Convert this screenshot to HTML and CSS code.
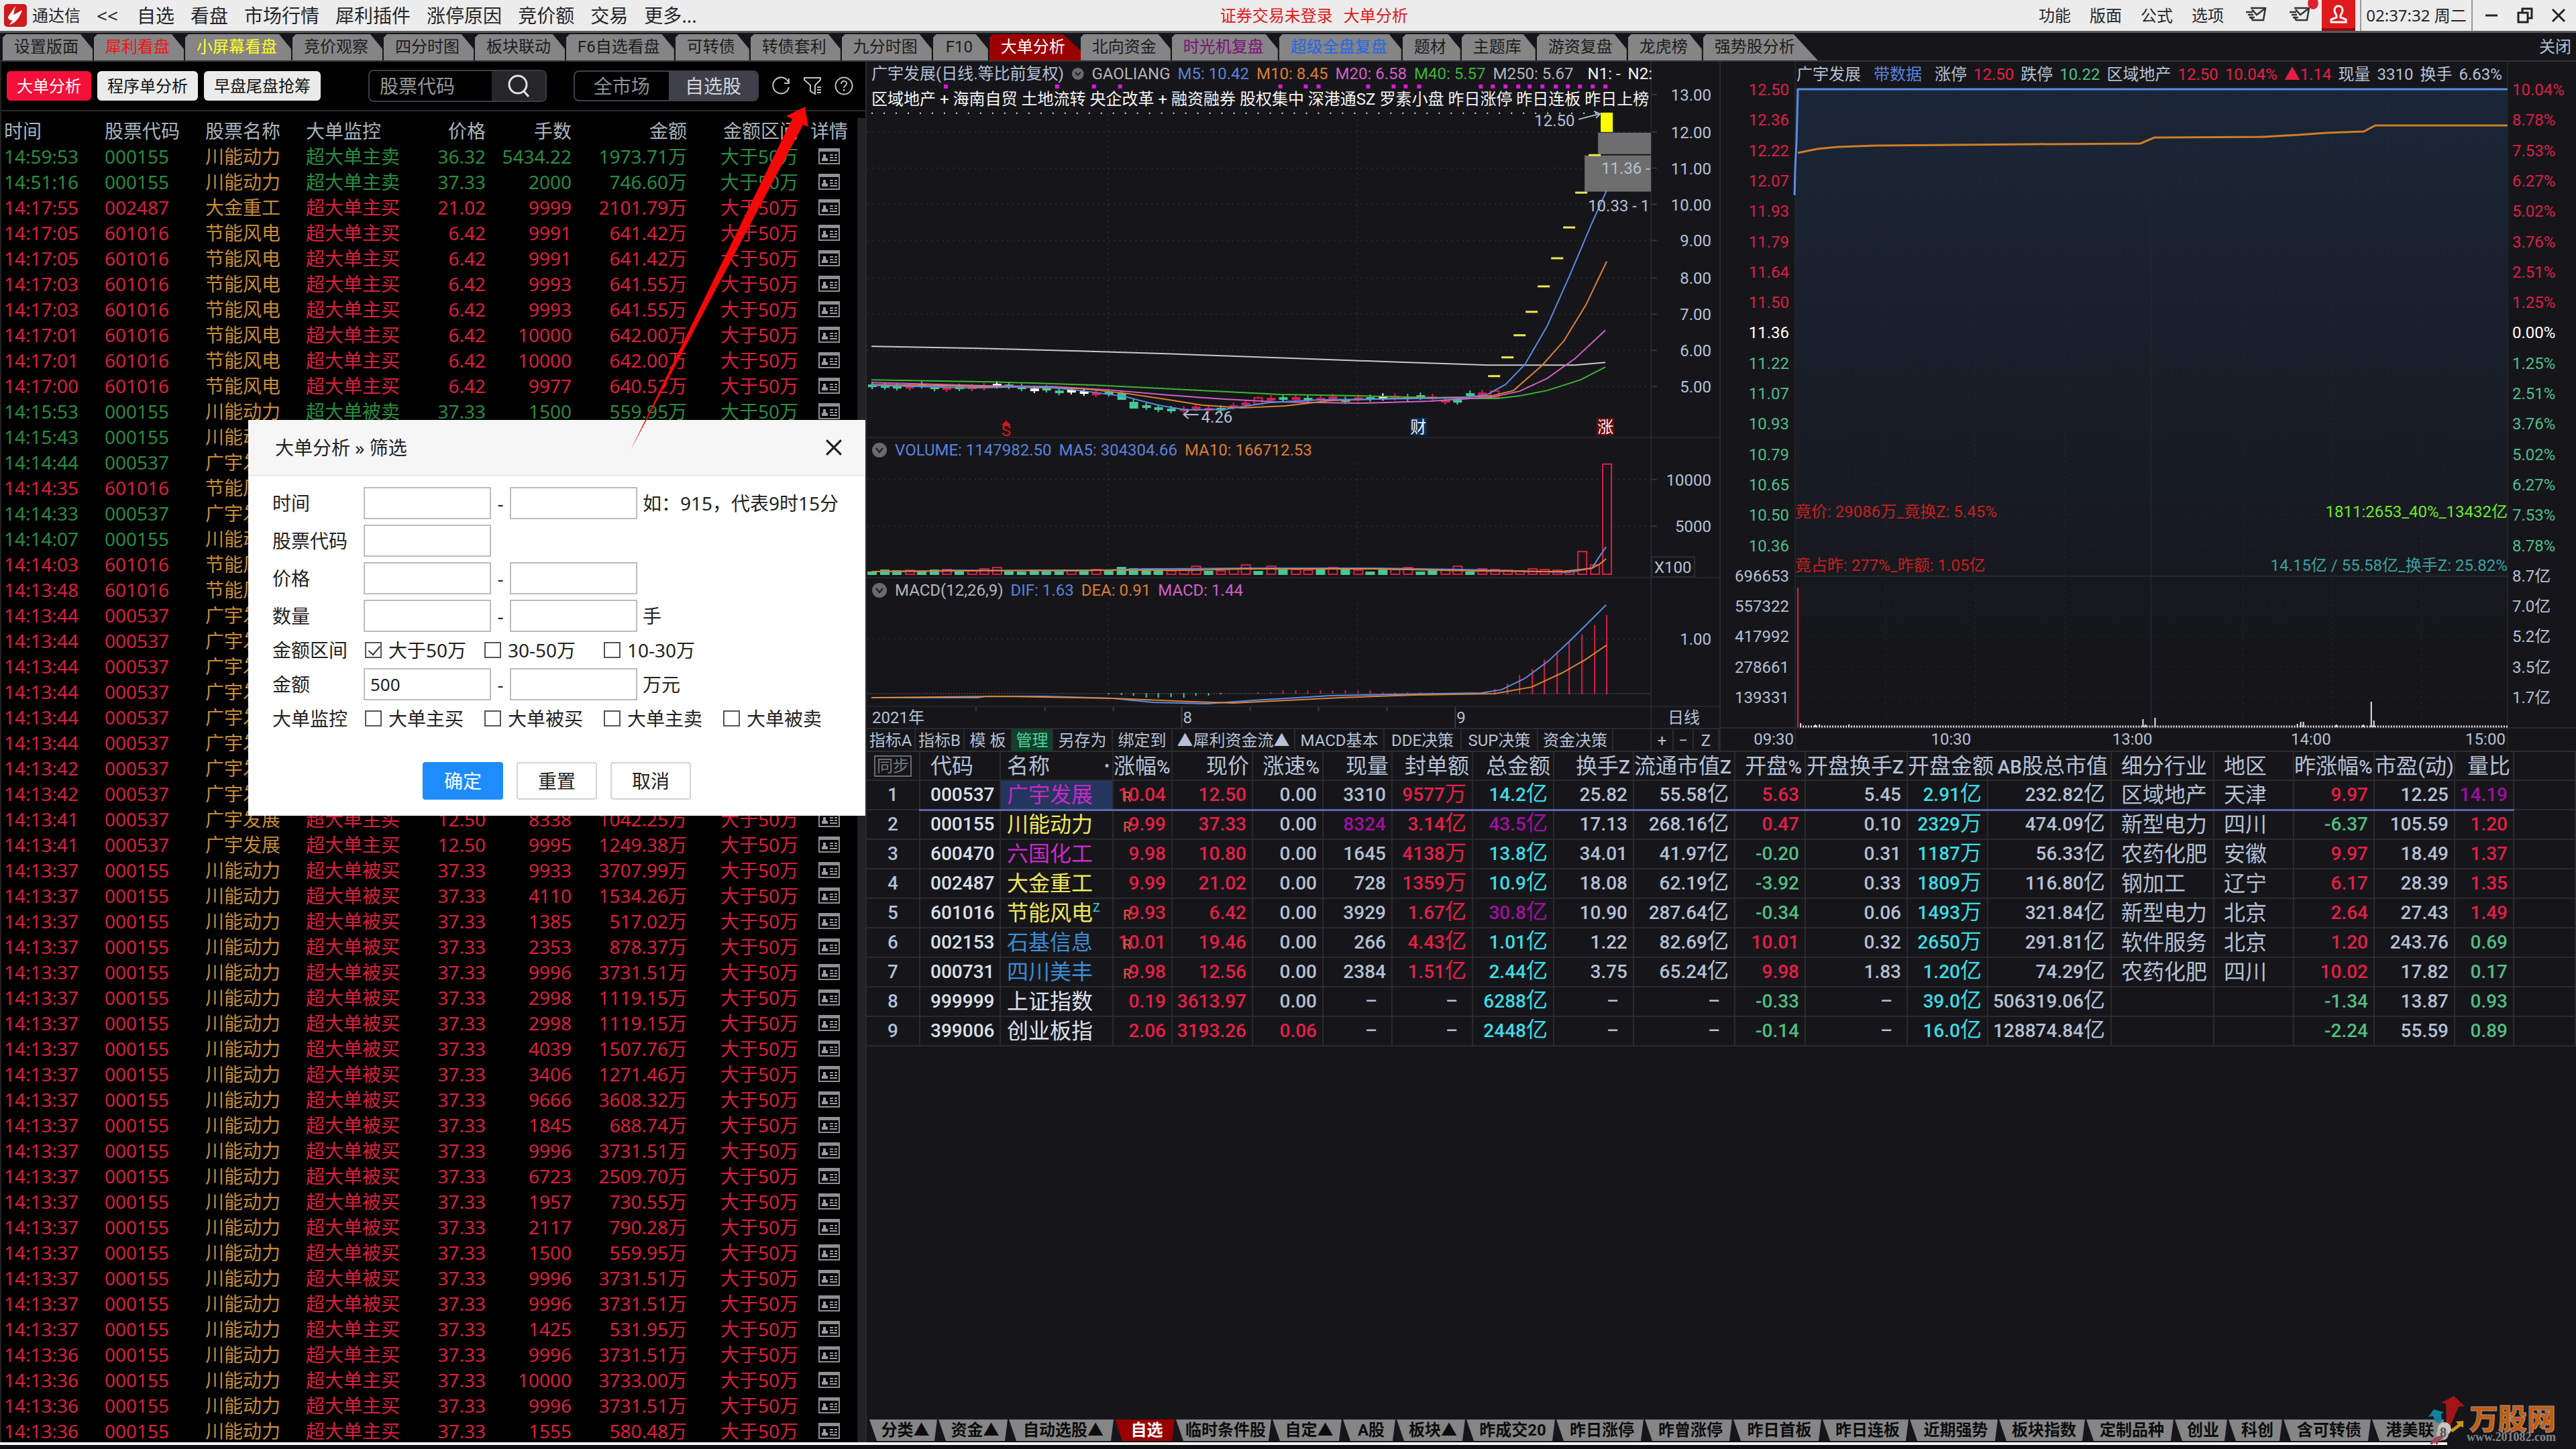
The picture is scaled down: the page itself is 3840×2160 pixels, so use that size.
FILE: index.html
```html
<!DOCTYPE html>
<html lang="zh-CN">
<head>
    <meta charset="UTF-8">
    <meta name="viewport" content="width=device-width, initial-scale=1.0">
    <title>通达信 - 大单分析</title>
    <link rel="stylesheet" href="styles.css">
</head>
<body>

<svg class="sprite" aria-hidden="true">
    <symbol id="i-card" viewBox="0 0 32 24">
        <path d="M0 0h32v24H0z" fill="#8e9094"/>
        <path d="M2 5h28v17H2z" fill="#000"/>
        <path d="M5 19v-4l2-1V9h4v5l3 1v4z" fill="#9a9ca0"/>
        <path d="M17 10h5M24 10h4M17 14h5M24 14h4M17 18h11" stroke="#9a9ca0" stroke-width="2"/>
    </symbol>
    <symbol id="i-mail" viewBox="0 0 32 24">
        <path d="M8 2h22l-3 18H11l-3-5" fill="none" stroke="#333" stroke-width="2.5"/>
        <path d="M10 4l7 8L29 3M1 8h10M4 12h8M6 16h8" fill="none" stroke="#333" stroke-width="2.5"/>
    </symbol>
    <symbol id="i-fold" viewBox="0 0 24 24">
        <circle cx="12" cy="12" r="11" fill="#6a6a6a"/>
        <path d="M7 9l5 6 5-6" fill="none" stroke="#222" stroke-width="2.5"/>
    </symbol>
</svg>

<header class="topbar">
    <svg class="brand" viewBox="0 0 34 34">
        <rect width="34" height="34" rx="5" fill="#d01a1c"/>
        <path d="M17 3l-3 13 6-3 7-4c-3 9-8 19-19 22l5-7c-5 1-7-2-7-5z" fill="#fff"/>
    </svg>
    <span class="brand-name">通达信</span>
    <button class="back">&lt;&lt;</button>
    <nav class="menu">
        <a href="#">自选</a><a href="#">看盘</a><a href="#">市场行情</a><a href="#">犀利插件</a><a href="#">涨停原因</a><a href="#">竞价额</a><a href="#">交易</a><a href="#">更多...</a>
    </nav>
    <div class="notice"><span>证券交易未登录</span><span>大单分析</span></div>
    <nav class="menu-right">
        <a href="#">功能</a><a href="#">版面</a><a href="#">公式</a><a href="#">选项</a>
    </nav>
    <button class="mail" aria-label="邮件"><svg><use href="#i-mail"/></svg></button>
    <button class="mail unread" aria-label="未读邮件"><svg><use href="#i-mail"/></svg></button>
    <button class="user" aria-label="用户">
        <svg viewBox="0 0 30 30"><path d="M15 3c4 0 6 3 6 6 0 4-2 6-3 8v3l8 3v4H4v-4l8-3v-3c-1-2-3-4-3-8 0-3 2-6 6-6z" fill="none" stroke="#fff" stroke-width="3"/></svg>
    </button>
    <time class="clock">02:37:32 周二</time>
    <div class="win">
        <button aria-label="最小化"><svg viewBox="0 0 24 24"><path d="M3 12h18" stroke="#222" stroke-width="3"/></svg></button>
        <button aria-label="还原"><svg viewBox="0 0 24 24"><path d="M2 8h14v14H2zM8 8V2h14v14h-6" fill="none" stroke="#222" stroke-width="3"/></svg></button>
        <button aria-label="关闭窗口"><svg viewBox="0 0 24 24"><path d="M3 3l18 18M21 3L3 21" stroke="#222" stroke-width="3"/></svg></button>
    </div>
</header>

<nav class="tabs">
    <a href="#">设置版面</a><a href="#" class="c-red">犀利看盘</a><a href="#" class="c-yellow">小屏幕看盘</a><a href="#">竞价观察</a><a href="#">四分时图</a><a href="#">板块联动</a><a href="#">F6自选看盘</a><a href="#">可转债</a><a href="#">转债套利</a><a href="#">九分时图</a><a href="#">F10</a><a href="#" class="active">大单分析</a><a href="#">北向资金</a><a href="#" class="c-purple">时光机复盘</a><a href="#" class="c-blue">超级全盘复盘</a><a href="#">题材</a><a href="#">主题库</a><a href="#">游资复盘</a><a href="#">龙虎榜</a><a href="#" class="last">强势股分析</a>
    <button class="close-page">关闭</button>
</nav>

<main class="main">
    <section class="orders">
        <div class="toolbar">
            <button class="btn on">大单分析</button>
            <button class="btn">程序单分析</button>
            <button class="btn">早盘尾盘抢筹</button>
            <div class="search">
                <input type="text" placeholder="股票代码" aria-label="股票代码">
                <button aria-label="搜索"><svg viewBox="0 0 36 36"><circle cx="17" cy="16" r="13"/><path d="M26 26l7 8"/></svg></button>
            </div>
            <div class="segment">
                <button>全市场</button>
                <button class="on">自选股</button>
            </div>
            <div class="tools">
                <button aria-label="刷新"><svg viewBox="0 0 28 28"><path d="M25 8A12 12 0 1 0 26 16M26 3v7h-7"/></svg></button>
                <button aria-label="筛选"><svg viewBox="0 0 28 28"><path d="M2 2h24v3l-8 8v13l-7-4V13L2 5zM21 16h6M21 20h6M21 24h6"/></svg></button>
                <button aria-label="帮助"><svg viewBox="0 0 28 28"><circle cx="14" cy="14" r="12.500"/><path d="M10 11c0-6 9-5 8 0-1 3-4 3-4 6M14 19v3"/></svg></button>
            </div>
        </div>
        <div class="orders-body">
            <table class="order-table">
                <thead>
                <tr><th>时间</th><th>股票代码</th><th>股票名称</th><th>大单监控</th><th class="r">价格</th><th class="r">手数</th><th class="r">金额</th><th class="r">金额区间</th><th class="c">详情</th></tr>
                </thead>
                <tbody id="orders"></tbody>
            </table>
            <div class="scrollbar"></div>
        </div>

        <form class="dialog" onsubmit="return false">
            <div class="dialog-head">
                <h2>大单分析 » 筛选</h2>
                <button type="button" aria-label="关闭"><svg viewBox="0 0 24 24"><path d="M2 2l20 20M22 2L2 22"/></svg></button>
            </div>
            <div class="dialog-body">
                <div class="row"><label for="t1">时间</label><input id="t1" type="text"><i>-</i><input type="text" aria-label="结束时间"><span>如：915，代表9时15分</span></div>
                <div class="row"><label for="code">股票代码</label><input id="code" type="text"></div>
                <div class="row"><label for="p1">价格</label><input id="p1" type="text"><i>-</i><input type="text" aria-label="最高价格"></div>
                <div class="row"><label for="n1">数量</label><input id="n1" type="text"><i>-</i><input type="text" aria-label="最大数量"><span>手</span></div>
                <div class="row checks"><b>金额区间</b>
                    <label><input type="checkbox" checked>大于50万</label>
                    <label><input type="checkbox">30-50万</label>
                    <label><input type="checkbox">10-30万</label>
                </div>
                <div class="row"><label for="m1">金额</label><input id="m1" type="text" value="500"><i>-</i><input type="text" aria-label="最大金额"><span>万元</span></div>
                <div class="row checks"><b>大单监控</b>
                    <label><input type="checkbox">大单主买</label>
                    <label><input type="checkbox">大单被买</label>
                    <label><input type="checkbox">大单主卖</label>
                    <label><input type="checkbox">大单被卖</label>
                </div>
            </div>
            <div class="dialog-foot">
                <button class="primary">确定</button>
                <button type="reset">重置</button>
                <button type="button">取消</button>
            </div>
        </form>

        <svg class="pointer" viewBox="0 0 270 520"><path d="M262 4L234 18 243 22 2 516 259 31 267 34z" fill="#f40808"/></svg>
    </section>

    <section class="market">
        <div class="charts">
            <div class="kline">
                <div class="pane pane-price">
                    <svg id="price" viewBox="1293 92 1272 560" preserveAspectRatio="none"></svg>
                    <div class="caption">
                        <p><span>广宇发展(日线.等比前复权)</span><svg class="fold"><use href="#i-fold"/></svg><span class="t-grey">GAOLIANG</span><span class="t-blue">M5: 10.42</span><span class="t-orange">M10: 8.45</span><span class="t-pink">M20: 6.58</span><span class="t-green">M40: 5.57</span><span class="t-grey">M250: 5.67</span><span class="t-white gap">N1: -</span><span class="t-white">N2:</span></p>
                        <p class="t-white">区域地产 + 海南自贸 土地流转 央企改革 + 融资融券 股权集中 深港通SZ 罗素小盘 昨日涨停 昨日连板 昨日上榜</p>
                    </div>
                </div>
                <div class="pane pane-volume">
                    <svg id="volume" viewBox="1293 653 1272 208" preserveAspectRatio="none"></svg>
                    <div class="caption">
                        <p class="t-blue"><svg class="fold"><use href="#i-fold"/></svg><span>VOLUME: 1147982.50</span><span>MA5: 304304.66</span><span class="t-orange">MA10: 166712.53</span></p>
                    </div>
                </div>
                <div class="pane pane-macd">
                    <svg id="macd" viewBox="1293 862 1272 191" preserveAspectRatio="none"></svg>
                    <div class="caption">
                        <p><svg class="fold"><use href="#i-fold"/></svg><span class="t-grey">MACD(12,26,9)</span><span class="t-blue">DIF: 1.63</span><span class="t-orange">DEA: 0.91</span><span class="t-pink">MACD: 1.44</span></p>
                    </div>
                </div>
                <div class="pane pane-date">
                    <svg id="dates" viewBox="1293 1054 1272 31" preserveAspectRatio="none"></svg>
                </div>
                <nav class="indicators">
                    <a href="#">指标A</a><a href="#">指标B</a><a href="#">模 板</a><a href="#" class="on">管理</a><a href="#">另存为</a><a href="#">绑定到</a><a href="#">▲犀利资金流▲</a><a href="#">MACD基本</a><a href="#">DDE决策</a><a href="#">SUP决策</a><a href="#">资金决策</a><span></span><a href="#">+</a><a href="#">−</a><a href="#">Z</a>
                </nav>
            </div>
            <div class="minute pane">
                <svg id="minute" viewBox="2566 92 1274 1029" preserveAspectRatio="none"></svg>
                <div class="caption minute-caption">
                    <p><span>广宇发展</span><span class="t-blue wide">带数据</span><span>涨停</span><span class="t-red">12.50</span><span>跌停</span><span class="t-mint">10.22</span><span>区域地产</span><span class="t-red">12.50</span><span class="t-red">10.04%</span><span class="t-red">▲1.14</span><span>现量</span><span>3310</span><span>换手</span><span>6.63%</span></p>
                </div>
            </div>
        </div>

        <table class="quotes">
            <colgroup id="quote-cols"></colgroup>
            <thead>
            <tr><th class="c"><button class="sync">同步</button></th><th class="code">代码</th><th class="name">名称<em>•</em></th><th>涨幅<b>%</b></th><th>现价</th><th>涨速<b>%</b></th><th>现量</th><th>封单额</th><th>总金额</th><th>换手<b>Z</b></th><th>流通市值<b>Z</b></th><th>开盘<b>%</b></th><th>开盘换手<b>Z</b></th><th>开盘金额</th><th><b>AB</b>股总市值</th><th class="l">细分行业</th><th class="l">地区</th><th>昨涨幅<b>%</b></th><th>市盈(动)</th><th>量比</th><th></th></tr>
            </thead>
            <tbody id="quotes"></tbody>
        </table>

        <nav class="sheets" id="sheets"></nav>
    </section>
</main>
<div class="bottom-edge"></div>

<svg class="site-logo" viewBox="0 0 240 100">
    <path d="M58 21L74 36 65 37 53 65 47 63 46 32 39 31z" fill="#a31419"/>
    <path d="M28 41L43 45 39 48 40 58 36 62 30 59 27 51 20 52z" fill="#14809f"/>
    <path d="M61 59L72 58 72 68 68 66 56 75 52 72 64 63z" fill="#c99a12"/>
    <circle cx="44" cy="70" r="10" fill="#c9c6c0"/>
    <circle cx="41" cy="78" r="9" fill="#b8b5af"/>
    <text x="37" y="82" class="coin">8</text>
    <path d="M24 93q4-10 18-12M32 93q1-8 10-10" fill="none" stroke="#c8232b" stroke-width="3"/>
    <path d="M28 92q4-9 14-9" fill="none" stroke="#2a86b8" stroke-width="2"/>
    <text x="81" y="71" class="logo-name">万股网</text>
    <text x="77" y="88" class="logo-url">www.201082.com</text>
</svg>

<script src="script.js"></script>
</body>
</html>
```
FILE: styles.css
```css
* {
    box-sizing: border-box;
}

html, body {
    height: 100%;
    margin: 0;
}

body {
    display: flex;
    flex-direction: column;
    background: #16161a;
    color: #b4c0d6;
    font-family: "Noto Sans", "Noto Sans CJK SC", sans-serif;
    font-size: 28px;
    line-height: 38px;
    overflow: hidden;
}

a {
    color: inherit;
    text-decoration: none;
}

button {
    padding: 0;
    border: 0;
    background: none;
    color: inherit;
    font: inherit;
    cursor: pointer;
}

.sprite {
    position: absolute;
    width: 0;
    height: 0;
}

/* Top bar */
.topbar {
    display: flex;
    align-items: center;
    flex: none;
    height: 49px;
    padding-left: 6px;
    background: #ececec;
    border-bottom: 3px solid #58595c;
    color: #26262a;
    white-space: nowrap;
}

.brand {
    width: 34px;
    height: 34px;
    margin-right: 8px;
}

.brand-name {
    font-size: 24px;
}

.back {
    margin: 0 28px 0 24px;
}

.menu {
    display: flex;
    gap: 24px;
}

.notice {
    display: flex;
    flex: 1;
    gap: 16px;
    padding-left: 780px;
    color: #e01818;
    font-size: 24px;
}

.menu-right {
    display: flex;
    gap: 28px;
    margin-right: 32px;
    font-size: 24px;
}

.mail {
    height: 46px;
    margin-right: 33px;
}

.mail svg {
    width: 32px;
    height: 24px;
    margin-top: 6px;
}

.mail.unread {
    position: relative;
    margin-right: 17px;
}

.mail.unread::after {
    content: "";
    position: absolute;
    top: -4px;
    right: -12px;
    width: 16px;
    height: 18px;
    border-radius: 50%;
    background: #e02030;
}

.user {
    width: 50px;
    height: 46px;
    margin-right: 7px;
    background: #e01a1c;
    border-bottom: 4px solid #8c0d10;
}

.user svg {
    width: 30px;
    height: 30px;
    margin-top: 6px;
}

.clock {
    width: 168px;
    height: 46px;
    border: 1px solid #9a9a9a;
    border-width: 0 2px;
    font-size: 24px;
    line-height: 46px;
    text-align: center;
}

.win {
    display: flex;
    gap: 26px;
    padding: 0 14px 0 16px;
}

.win svg {
    display: block;
    width: 24px;
    height: 24px;
}

/* Page tabs */
.tabs {
    display: flex;
    flex: none;
    height: 43px;
    padding: 2px 7px 0 4px;
    border-bottom: 2px solid #333438;
    font: 24px/39px Roboto, "Noto Sans CJK SC", sans-serif;
    white-space: nowrap;
}

.tabs a {
    min-width: 84px;
    padding: 0 23px 0 17px;
    background: #858585;
    color: #1c1c1e;
    text-align: center;
    clip-path: polygon(0 5px, 5px 0, calc(100% - 20px) 0, calc(100% - 2px) 22px, calc(100% - 2px) 100%, 0 100%);
}

.tabs a.active {
    position: relative;
    margin-right: -16px;
    padding-right: 39px;
    background: #9c0000;
    color: #fff;
    clip-path: polygon(0 5px, 5px 0, calc(100% - 42px) 0, 100% 100%, 0 100%);
}

.tabs a.last {
    padding-right: 34px;
    clip-path: polygon(0 5px, 5px 0, calc(100% - 36px) 0, 100% 100%, 0 100%);
}

.tabs a.c-red { color: #f01414; }
.tabs a.c-yellow { color: #ffff20; }
.tabs a.c-purple { color: #7c1078; }
.tabs a.c-blue { color: #2468e8; }

.close-page {
    margin-left: auto;
}

/* Main area */
.main {
    display: grid;
    grid-template-columns: minmax(0, 1292fr) minmax(0, 2548fr);
    flex: 1;
    min-height: 0;
}

.orders {
    position: relative;
    display: flex;
    flex-direction: column;
    min-height: 0;
    background: #000;
    border-right: 2px solid #2c2c30;
    border-left: 2px solid #222;
}

.toolbar {
    display: flex;
    align-items: center;
    flex: none;
    height: 74px;
    padding: 0 18px 0 8px;
    border-bottom: 2px solid #2c2c2e;
    white-space: nowrap;
}

.btn {
    height: 44px;
    margin-right: 9px;
    padding: 0 15px;
    border-radius: 6px;
    background: #ebebeb;
    color: #111;
    font-size: 24px;
    line-height: 44px;
}

.btn.on {
    background: #f41038;
    color: #fff;
}

.search {
    display: flex;
    width: 266px;
    height: 48px;
    margin-left: 62px;
    border: 2px solid #3c3d44;
    border-radius: 8px;
    overflow: hidden;
}

.search input {
    flex: 1;
    min-width: 0;
    padding: 0 0 0 15px;
    border: 0;
    background: #000;
    color: #a0a0a0;
    font: inherit;
}

.search input::placeholder {
    color: #98989a;
}

.search button {
    width: 80px;
    background: #26262a;
}

.search svg {
    display: block;
    width: 36px;
    height: 36px;
    margin: auto;
    fill: none;
    stroke: #e4e4e4;
    stroke-width: 3;
}

.segment {
    display: flex;
    width: 277px;
    height: 46px;
    margin-left: 40px;
    border: 2px solid #3f404b;
    border-radius: 8px;
    overflow: hidden;
}

.segment button {
    flex: 1;
    color: #8f9092;
}

.segment .on {
    flex: 0 0 132px;
    background: #3f404b;
    color: #d4d4d6;
}

.tools {
    display: flex;
    gap: 19px;
    margin-left: 19px;
}

.tools svg {
    display: block;
    width: 28px;
    height: 28px;
    fill: none;
    stroke: #c0c0c2;
    stroke-width: 2;
}

.orders-body {
    display: flex;
    flex: 1;
    min-height: 0;
    padding-top: 10px;
    overflow: hidden;
}

.order-table {
    flex: 1;
    align-self: flex-start;
    width: 100%;
    border-collapse: collapse;
    table-layout: fixed;
    white-space: nowrap;
}

.order-table tr {
    height: 38px;
}

.order-table th, .order-table td {
    width: 150px;
    padding: 0 0 0 4px;
    font-weight: normal;
    line-height: 38px;
    text-align: left;
}

.order-table th {
    color: #aab4bc;
}

.order-table th:nth-child(5) { width: 122px; }
.order-table th:nth-child(6) { width: 128px; }
.order-table th:nth-child(7) { width: 172px; }
.order-table th:nth-child(8) { width: 166px; }
.order-table th:nth-child(9) { width: auto; }

.order-table .r { text-align: right; }
.order-table .c { text-align: center; }
.order-table .c button { display: block; margin: auto; }
.order-table .buy { color: #dc1e3c; }
.order-table .sell { color: #2a8c40; }
.order-table .stock { color: #c88c38; }

.order-table svg {
    display: block;
    width: 32px;
    height: 24px;
}

.scrollbar {
    flex: none;
    width: 12px;
    background: #222224;
}

/* Filter dialog */
.dialog {
    position: absolute;
    top: 534px;
    right: 0;
    width: 920px;
    background: #fff;
    color: #222;
    white-space: nowrap;
}

.dialog-head {
    display: flex;
    align-items: center;
    justify-content: space-between;
    height: 84px;
    padding: 0 34px 0 40px;
    background: #f6f6f7;
    border-bottom: 2px solid #ececec;
}

.dialog-head h2 {
    margin: 0;
    font-size: 28px;
    font-weight: normal;
}

.dialog-head svg {
    display: block;
    width: 26px;
    height: 26px;
    stroke: #222;
    stroke-width: 3;
}

.dialog-body {
    display: flex;
    flex-direction: column;
    gap: 8px;
    padding: 16px 0 0 36px;
}

.row {
    display: flex;
    align-items: center;
    height: 48px;
}

.row > label:first-child, .row b {
    width: 136px;
    font-weight: normal;
}

.row input[type="text"] {
    width: 190px;
    height: 48px;
    padding: 0 8px;
    border: 2px solid #bcbcbc;
    background: #fff;
    color: #222;
    font: 26px "Noto Sans", "Noto Sans CJK SC", sans-serif;
}

.row i {
    width: 28px;
    font-style: normal;
    text-align: center;
}

.row span {
    margin-left: 8px;
}

.row.checks {
    height: 38px;
}

.checks label {
    display: flex;
    align-items: center;
    width: 178px;
}

.row input[type="checkbox"] {
    appearance: none;
    width: 25px;
    height: 24px;
    margin: 0 10px 0 2px;
    border: 2px solid #555;
    background: #fff;
}

.row input[type="checkbox"]:checked::after {
    content: "";
    display: block;
    width: 8px;
    height: 15px;
    margin-left: 7px;
    border: solid #333;
    border-width: 0 2px 2px 0;
    transform: rotate(40deg);
}

.dialog-foot {
    display: flex;
    justify-content: center;
    gap: 20px;
    padding: 46px 0 24px;
}

.dialog-foot button {
    width: 120px;
    height: 56px;
    border: 2px solid #d4d4d4;
    border-radius: 4px;
    background: #fff;
}

.dialog-foot .primary {
    border-color: #1e8cff;
    background: #1e8cff;
    color: #fff;
}

.pointer {
    position: absolute;
    top: 63px;
    left: 936px;
    width: 270px;
    height: 520px;
}

/* Charts */
.market {
    display: flex;
    flex-direction: column;
    min-width: 0;
    font-family: Roboto, "Noto Sans CJK SC", sans-serif;
}

.charts {
    display: grid;
    grid-template-columns: minmax(0, 1273fr) minmax(0, 1275fr);
    flex: none;
    height: 1029px;
    border-bottom: 2px solid #2e2e30;
    font-size: 24px;
}

.kline {
    display: flex;
    flex-direction: column;
    border-right: 2px solid #2a2a2e;
}

.pane {
    display: grid;
    min-height: 0;
}

/* the caption lies over the plot in one grid cell */
.pane > * {
    grid-area: 1 / 1;
    min-width: 0;
    width: 100%;
    height: 100%;
}

.pane-price { height: 561px; border-bottom: 2px solid #222429; }
.pane-volume { height: 209px; border-bottom: 2px solid #222429; }
.pane-macd { height: 192px; border-bottom: 2px solid #222429; }
.pane-date { height: 31px; }

.pane text {
    fill: #b4c0d6;
    font-size: 24px;
}

.caption {
    padding: 0 100px 0 7px;
    overflow: hidden;
    white-space: nowrap;
}

.caption p {
    display: flex;
    gap: 11px;
    height: 38px;
    margin: 0;
    line-height: 36px;
}

.caption .gap {
    margin-left: 10px;
}

.minute-caption {
    padding: 0 0 0 113px;
}

.minute-caption p {
    gap: 10px;
    line-height: 38px;
}

.minute-caption .wide {
    margin: 0 9px;
}

.fold {
    width: 24px;
    height: 24px;
    margin-top: 6px;
}

.t-white { color: #f4f4f4; }
.t-grey { color: #b4b4b8; }
.t-blue { color: #5a82dc; }
.t-orange { color: #dc7d32; }
.t-pink { color: #d25fc8; }
.t-green { color: #3cb432; }
.t-mint { color: #50be8c; }
.t-red { color: #e61e46; }

.indicators {
    display: grid;
    grid-template-columns: 73px 73px 71px 61px 89px 89px 183px 133px 115px 114px 112px 1fr 33px 30px 38px;
    flex: 1;
    border-top: 2px solid #2a2a2e;
    line-height: 34px;
    text-align: center;
    white-space: nowrap;
}

.indicators > * {
    border-right: 2px solid #2a2a2e;
    overflow: hidden;
}

.indicators .on {
    background: #12402c;
    color: #50d296;
}

/* Quotes */
.quotes {
    width: 100%;
    border-collapse: collapse;
    table-layout: fixed;
    font-size: 28px;
    line-height: 42px;
    white-space: nowrap;
}

.quotes tr {
    height: 44px;
}

.quotes thead tr {
    height: 42px;
}

.quotes th, .quotes td {
    height: 44px;
    padding: 0 8px 0 0;
    border: 1px solid #2a2a2c;
    border-width: 0 2px 2px 0;
    text-align: right;
}

.quotes th {
    height: 42px;
    padding-right: 4px;
    font-size: 32px;
    font-weight: normal;
    line-height: 38px;
}

.quotes td {
    font-weight: 500;
    line-height: 40px;
}

.quotes th b {
    font-size: 28px;
    font-weight: 500;
    line-height: 28px;
}

.quotes .c {
    padding: 0;
    text-align: center;
}

.quotes .code {
    padding-left: 15px;
    text-align: left;
}

.quotes td.code {
    color: #dce0ea;
}

.quotes .name {
    padding-left: 9px;
    text-align: left;
}

.quotes .name em {
    float: right;
    font-size: 24px;
    font-style: normal;
}

.quotes .l {
    padding-left: 14px;
    text-align: left;
}

.quotes .zh, .quotes u {
    font-size: 32px;
    font-weight: 400;
    text-decoration: none;
}

.quotes u {
    line-height: 28px;
}

.quotes .nil {
    padding-right: 21px;
}

.quotes sup {
    position: absolute;
    color: #46c8d2;
    font-size: 18px;
    line-height: 24px;
}

.quotes .mark {
    position: relative;
}

.quotes .mark::before {
    content: "R";
    position: absolute;
    top: 4px;
    left: 14px;
    color: #d8503c;
    font-size: 20px;
}

.quotes .sel td:not(:first-child):not(:last-child) {
    border-bottom: 3px solid #5a68b0;
}

.quotes .sel .name {
    background: #24365e;
}

.red { color: #e61e46; }
.grn { color: #50be82; }
.cyan { color: #3cdce6; }
.mag { color: #a00fa0; }
.quotes .n-mag { color: #c828c8; }
.quotes .n-yel { color: #f0e65a; }
.quotes .n-blu { color: #3c8cd2; }
.quotes .n-wht { color: #dce0ea; }

.sync {
    display: block;
    width: 56px;
    height: 32px;
    margin: auto;
    border: 2px solid #6c6c6e;
    color: #77787c;
    font-size: 24px;
    line-height: 28px;
}

.sheets {
    display: flex;
    height: 34px;
    margin-top: auto;
    padding: 0 0 2px 4px;
    color: #0c0c0e;
    font-size: 24px;
    font-weight: 700;
    line-height: 32px;
    white-space: nowrap;
}

.sheets a {
    flex: 0 1 auto;
    padding-left: 4px;
    background: #858585;
    text-align: center;
    clip-path: polygon(0 0, calc(100% - 2px) 0, calc(100% - 6px) 100%, 11px 100%);
}

.sheets .active {
    background: #960000;
    color: #fff;
}

.bottom-edge {
    flex: none;
    width: 95%;
    height: 10px;
    border-top: 4px solid #f4f4f4;
    background: #0e0e10;
}

.site-logo {
    position: absolute;
    right: 0;
    bottom: 0;
    width: 240px;
    height: 100px;
}

.coin {
    fill: #55524e;
    font: bold 20px "Liberation Serif", serif;
}

.logo-name {
    fill: #c85a0a;
    stroke: #9a9a9a;
    stroke-width: 1;
    font: 900 43px "Noto Sans CJK SC", sans-serif;
}

.logo-url {
    fill: #85858c;
    font: bold 18px "Liberation Serif", serif;
}
```
FILE: script.js
```js
// time, code, name, type, price, lots, amount
const DL = ['000155', '川能动力'], JN = ['601016', '节能风电'], GY = ['000537', '广宇发展'], DJ = ['002487', '大金重工'];
const orders = [
    ['14:59:53', DL, '主卖', '36.32', '5434.22', '1973.71'],
    ['14:51:16', DL, '主卖', '37.33', '2000', '746.60'],
    ['14:17:55', DJ, '主买', '21.02', '9999', '2101.79'],
    ['14:17:05', JN, '主买', '6.42', '9991', '641.42'],
    ['14:17:05', JN, '主买', '6.42', '9991', '641.42'],
    ['14:17:03', JN, '主买', '6.42', '9993', '641.55'],
    ['14:17:03', JN, '主买', '6.42', '9993', '641.55'],
    ['14:17:01', JN, '主买', '6.42', '10000', '642.00'],
    ['14:17:01', JN, '主买', '6.42', '10000', '642.00'],
    ['14:17:00', JN, '主买', '6.42', '9977', '640.52'],
    ['14:15:53', DL, '被卖', '37.33', '1500', '559.95'],
    ['14:15:43', DL, '卖'], ['14:14:44', GY, '卖'], ['14:14:35', JN, '买'], ['14:14:33', GY, '卖'],
    ['14:14:07', DL, '卖'], ['14:14:03', JN, '买'], ['14:13:48', JN, '买'],
    ['14:13:44', GY, '买'], ['14:13:44', GY, '买'], ['14:13:44', GY, '买'], ['14:13:44', GY, '买'],
    ['14:13:44', GY, '买'], ['14:13:44', GY, '买'], ['14:13:42', GY, '买'], ['14:13:42', GY, '买'],
    ['14:13:41', GY, '主买', '12.50', '8338', '1042.25'],
    ['14:13:41', GY, '主买', '12.50', '9995', '1249.38'],
    ...[['9933', '3707.99'], ['4110', '1534.26'], ['1385', '517.02'], ['2353', '878.37'], ['9996', '3731.51'],
        ['2998', '1119.15'], ['2998', '1119.15'], ['4039', '1507.76'], ['3406', '1271.46'], ['9666', '3608.32'],
        ['1845', '688.74'], ['9996', '3731.51'], ['6723', '2509.70'], ['1957', '730.55'], ['2117', '790.28'],
        ['1500', '559.95'], ['9996', '3731.51'], ['9996', '3731.51']].map(v => ['14:13:37', DL, '被买', '37.33', ...v]),
    ['14:13:37', DL, '主买', '37.33', '1425', '531.95'],
    ['14:13:36', DL, '主买', '37.33', '9996', '3731.51'],
    ['14:13:36', DL, '主买', '37.33', '10000', '3733.00'],
    ['14:13:36', DL, '主买', '37.33', '9996', '3731.51'],
    ['14:13:36', DL, '主买', '37.33', '1555', '580.48']
];

document.getElementById('orders').innerHTML = orders.map(([time, [code, name], kind, price, lots, sum]) => {
    const cls = kind.includes('买') ? 'buy' : 'sell';
    const rest = price
        ? `<td>超大单${kind}</td><td class="r">${price}</td><td class="r">${lots}</td><td class="r">${sum}万</td><td class="r">大于50万</td><td class="c"><button aria-label="详情"><svg><use href="#i-card"/></svg></button></td>`
        : '<td colspan="6"></td>';
    return `<tr class="${cls}"><td>${time}</td><td>${code}</td><td class="stock">${name}</td>${rest}</tr>`;
}).join('');

// Quote table
const widths = [79, 120, 168, 88, 120, 105, 103, 120, 121, 119, 151, 105, 152, 120, 184, 153, 119, 120, 120, 88];
document.getElementById('quote-cols').innerHTML = widths.map(w => `<col style="width:${w}px">`).join('') + '<col>';

// a leading letter gives the colour: r red, g green, c cyan, m magenta
const quotes = [
    'n-mag R|000537|广宇发展|r10.04|r12.50|0.00|3310|r9577万|c14.2亿|25.82|55.58亿|r5.63|5.45|c2.91亿|232.82亿|区域地产|天津|r9.97|12.25|m14.19',
    'n-yel R|000155|川能动力|r9.99|r37.33|0.00|m8324|r3.14亿|m43.5亿|17.13|268.16亿|r0.47|0.10|c2329万|474.09亿|新型电力|四川|g-6.37|105.59|r1.20',
    'n-mag|600470|六国化工|r9.98|r10.80|0.00|1645|r4138万|c13.8亿|34.01|41.97亿|g-0.20|0.31|c1187万|56.33亿|农药化肥|安徽|r9.97|18.49|r1.37',
    'n-yel|002487|大金重工|r9.99|r21.02|0.00|728|r1359万|c10.9亿|18.08|62.19亿|g-3.92|0.33|c1809万|116.80亿|钢加工|辽宁|r6.17|28.39|r1.35',
    'n-yel R|601016|节能风电<sup>Z</sup>|r9.93|r6.42|0.00|3929|r1.67亿|m30.8亿|10.90|287.64亿|g-0.34|0.06|c1493万|321.84亿|新型电力|北京|r2.64|27.43|r1.49',
    'n-blu R|002153|石基信息|r10.01|r19.46|0.00|266|r4.43亿|c1.01亿|1.22|82.69亿|r10.01|0.32|c2650万|291.81亿|软件服务|北京|r1.20|243.76|g0.69',
    'n-blu R|000731|四川美丰|r9.98|r12.56|0.00|2384|r1.51亿|c2.44亿|3.75|65.24亿|r9.98|1.83|c1.20亿|74.29亿|农药化肥|四川|r10.02|17.82|g0.17',
    'n-wht|999999|上证指数|r0.19|r3613.97|0.00|–|–|c6288亿|–|–|g-0.33|–|c39.0亿|506319.06亿|||g-1.34|13.87|g0.93',
    'n-wht|399006|创业板指|r2.06|r3193.26|r0.06|–|–|c2448亿|–|–|g-0.14|–|c16.0亿|128874.84亿|||g-2.24|55.59|g0.89'
];
const colours = { r: 'red', g: 'grn', c: 'cyan', m: 'mag' };

document.getElementById('quotes').innerHTML = quotes.map((line, n) => {
    const [flag, code, name, ...vals] = line.split('|');
    const cells = vals.map((v, i) => {
        if (i === 12 || i === 13) return `<td class="l zh">${v}</td>`;
        let cls = colours[v[0]] || '';
        if (cls) v = v.slice(1);
        if (v === '–') cls += ' nil';
        if (i === 0 && flag.endsWith('R')) cls += ' mark';
        return `<td class="${cls}">${v.replace(/[万亿]/, '<u>$&</u>')}</td>`;
    }).join('');
    return `<tr class="${n === 0 ? 'sel' : ''}"><td class="c">${n + 1}</td><td class="code">${code}</td><td class="name zh ${flag.split(' ')[0]}">${name}</td>${cells}<td></td></tr>`;
}).join('');

// Sheet tabs at the bottom
const sheets = [['分类▲', 103], ['资金▲', 105], ['自动选股▲', 158], ['自选', 91], ['临时条件股', 144], ['自定▲', 105], ['A股', 80],
    ['板块▲', 104], ['昨成交20', 134], ['昨日涨停', 132], ['昨曾涨停', 132], ['昨日首板', 133], ['昨日连板', 130], ['近期强势', 133],
    ['板块指数', 130], ['定制品种', 132], ['创业', 80], ['科创', 82], ['含可转债', 132], ['港美联', 109]];
document.getElementById('sheets').innerHTML = sheets.map(([t, w]) =>
    `<a href="#" class="${t === '自选' ? 'active' : ''}" style="width:${w}px">${t}</a>`).join('');

// SVG helpers
const line = (x1, y1, x2, y2, c, w = 2, extra = '') => `<path d="M${x1} ${y1}L${x2} ${y2}" stroke="${c}" stroke-width="${w}" ${extra}/>`;
const poly = (pts, c, w = 2) => `<polyline points="${pts}" fill="none" stroke="${c}" stroke-width="${w}"/>`;
const rect = (x, y, w, h, c) => `<rect x="${x}" y="${y}" width="${w}" height="${h}" fill="${c}"/>`;
const box = (x, y, w, h, c) => `<rect x="${x}" y="${y}" width="${w}" height="${h}" fill="#16161a" stroke="${c}" stroke-width="2"/>`;
const text = (x, y, s, c, anchor = 'start') => `<text x="${x}" y="${y + 9}" text-anchor="${anchor}" style="fill:${c}">${s}</text>`;
const dots = 'stroke-dasharray="2 6"';
const GRID = '#2a2c32', LABEL = '#b4c0d6', RED = '#dc1e46', GREEN = '#46c896';
const BLUE = '#5a8ce6', ORANGE = '#dc8232', PINK = '#d25fc8';
const dayX = i => Math.round(1301 + i * 18.58);

// Daily price
let s = '';
[[13, 141], [12, 197], [11, 251], [10, 305], [9, 359], [8, 415], [7, 469], [6, 523], [5, 577]].forEach(([v, y]) => {
    if (v < 13) s += line(1294, y, 2463, y, GRID, 2, dots);
    s += line(2463, y, 2472, y, '#33363e') + text(2553, y, v.toFixed(2), LABEL, 'end');
});
s += line(1653, 170, 1653, 625, GRID, 2, dots) + line(2025, 170, 2025, 625, GRID, 2, dots) + line(2463, 92, 2463, 652, '#26282e');
s += line(1300, 169, 2386, 169, '#e8e8e8', 2, 'stroke-dasharray="2 16"');
[158, 358, 425, 471, 760, 806, 828, 918, 963, 985, 1009, 1120, 1142, 1165, 1188, 1209, 1231, 1255, 1277, 1299, 1322, 1345]
    .forEach(x => s += rect(Math.round(1277 + x / 1.206), 126, 6, 6, '#dc14dc'));
const candles = 'gggrggrgrrwggwggwwrgGGgggrrrgrrRrgrgrrgrgwrggrrggrRwr';
const base = [575, 576, 577, 577, 574, 578, 579, 578, 578, 577, 574, 575, 578, 581, 580, 584, 583, 585, 587, 586, 588, 601, 606, 609, 611, 611, 608, 610, 610, 606, 602, 597, 595, 594, 594, 595, 595, 593, 597, 594, 594, 592, 592, 593, 591, 593, 598, 598, 588, 587, 587];
base.forEach((y, i) => {
    const k = candles[i], x = dayX(i);
    const c = k === 'w' ? '#fff' : k.toLowerCase() === 'g' ? GREEN : RED;
    s += line(x, y - 5, x, y + 6, c);
    s += k === 'R' ? box(x - 6, y - 3, 12, 9, c) : rect(x - 6, y - 1, 13, k === 'G' ? 10 : 4, c);
});
s += poly('1300,517 1460,520 1610,524 1740,528 1906,534 2072,540 2220,545 2350,545 2395,541', '#c8c8c8');
s += poly('1300,567 1479,570 1637,575 1811,584 1910,589 2026,591 2184,595 2234,595 2267,591 2308,583 2358,567 2395,548', '#3cb432');
s += poly('1300,571 1479,576 1570,577 1653,582 1744,590 1827,596 1902,600 2026,602 2134,599 2225,593 2267,584 2308,565 2350,535 2395,493', PINK);
s += poly('1300,574 1529,578 1612,580 1678,587 1744,597 1794,605 1852,609 1918,606 1985,598 2076,595 2184,593 2225,591 2258,583 2300,546 2333,509 2366,455 2397,390', ORANGE);
s += rect(2384, 198, 79, 32, '#6e6e6e') + rect(2364, 232, 99, 54, '#6e6e6e');
s += poly('1300,575 1446,579 1554,577 1612,583 1678,592 1728,605 1769,612 1827,611 1894,601 1968,597 2176,594 2217,590 2246,574 2275,544 2308,487 2341,413 2374,335 2397,284', BLUE);
[[2379, 231], [2359, 287], [2341, 339], [2323, 385], [2303, 427], [2285, 465], [2267, 500], [2249, 533], [2229, 561]]
    .forEach(([x, y]) => s += rect(x - 9, y - 1, 18, 3, '#f0e650'));
s += rect(2388, 168, 18, 29, '#ffff00');
s += text(2289, 179, '12.50', LABEL) + line(2355, 178, 2386, 170, LABEL) + poly('2378,166 2387,170 2381,176', LABEL);
s += text(2389, 250, '11.36 -', LABEL) + text(2369, 306, '10.33 - 1', LABEL);
s += line(1766, 619, 1788, 619, LABEL) + poly('1773,613 1766,619 1773,625', LABEL) + text(1792, 622, '4.26', LABEL);
s += '<path d="M1501 628l7 7h-14z" fill="#e01414"/>' + text(1501, 642, 'S', '#e01414', 'middle');
s += rect(2104, 624, 25, 26, '#0d2c56') + text(2116, 637, '财', '#f0f0f0', 'middle');
s += rect(2382, 624, 26, 26, '#6a0a0a') + text(2395, 637, '涨', '#f0f0f0', 'middle');
document.getElementById('price').innerHTML = s;

// Volume
s = line(1294, 715, 2463, 715, GRID, 2, dots) + line(1294, 785, 2463, 785, GRID, 2, dots);
s += line(1653, 690, 1653, 858, GRID, 2, dots) + line(2025, 690, 2025, 858, GRID, 2, dots) + line(2463, 653, 2463, 861, '#26282e');
const vols = 'gggrggrgrrrgggggrgrgGgggrrrgrrrgrgrrgrgrggrrggrrgrrrrrrrrrrr';
const tall = { 10: 10, 20: 12, 21: 10, 22: 10, 26: 12, 30: 14, 32: 12, 36: 10, 37: 10, 38: 10, 43: 10, 47: 12, 57: 34, 58: 14, 59: 165 };
[...vols].forEach((k, i) => {
    const h = tall[i] || 5 + (i * 7) % 4, x = dayX(i) - 7;
    s += k.toLowerCase() === 'g' ? rect(x, 858 - h, 14, h, GREEN) : box(x + 1, 857 - h, 13, h, RED);
});
s += poly('1300,853 1400,852 1420,851 1600,852 1720,849 1860,848 2050,848 2180,850 2340,854 2375,848 2385,832 2396,816', BLUE);
s += poly('1300,853 1550,851 1780,851 1850,849 1940,849 2050,849 2200,852 2330,853 2375,848 2386,842 2396,834', ORANGE);
s += line(2463, 715, 2472, 715, '#33363e') + line(2463, 785, 2472, 785, '#33363e');
s += text(2553, 715, '10000', LABEL, 'end') + text(2553, 785, '5000', LABEL, 'end');
s += box(2464, 831, 64, 30, '#2a2c34') + text(2468, 846, 'X100', LABEL);
document.getElementById('volume').innerHTML = s;

// MACD
s = line(1294, 953, 2463, 953, GRID, 2, dots) + line(1294, 1035, 2463, 1035, '#3a3c42', 2, 'stroke-dasharray="2 2"');
s += line(1653, 900, 1653, 1050, GRID, 2, dots) + line(2025, 900, 2025, 1050, GRID, 2, dots) + line(2463, 862, 2463, 1053, '#26282e');
[2, 3, 4, 7, 7, 6, 7, 4, 4, 2].forEach((h, i) => s += line(dayX(19 + i), 1034, dayX(19 + i), 1034 + h, GREEN));
for (let i = 31; i < 46; i++) s += line(dayX(i), 1035, dayX(i), i > 32 && i < 41 ? 1030 : 1033, RED);
[1028, 1020, 1007, 998, 984, 972, 958, 946, 932, 917].forEach((y, i) => s += line(dayX(50 + i), y, dayX(50 + i), 1036, RED));
s += poly('1300,1041 1459,1041 1470,1039 1560,1039 1660,1042 1720,1048 1800,1050 1870,1045 1985,1038 2080,1036 2210,1034 2240,1029 2275,1012 2310,986 2345,953 2380,918 2396,902', BLUE);
s += poly('1300,1041 1500,1039 1660,1042 1780,1047 1840,1049 2000,1041 2110,1037 2230,1035 2285,1025 2330,1004 2365,984 2397,962', ORANGE);
s += text(2553, 953, '1.00', LABEL, 'end');
document.getElementById('macd').innerHTML = s;

// Date axis
s = '';
[1456, 1559, 1661, 1865, 1967, 2069].forEach(x => s += line(x, 1054, x, 1060, '#3a3c42'));
s += line(1763, 1054, 1763, 1085, '#3a3c42') + line(2171, 1054, 2171, 1085, '#3a3c42') + line(2463, 1054, 2463, 1085, '#26282e');
s += text(1301, 1069, '2021年', LABEL) + text(1765, 1069, '8', LABEL) + text(2173, 1069, '9', LABEL) + text(2488, 1069, '日线', LABEL);
document.getElementById('dates').innerHTML = s;

// Minute chart
s = '<linearGradient id="sky" x1="0" y1="0" x2="0" y2="1"><stop offset="0" stop-color="#1b2637"/><stop offset="1" stop-color="#16171b"/></linearGradient>';
s += rect(2677, 133, 1061, 820, 'url(#sky)');
const leftAxis = ['12.50', '12.36', '12.22', '12.07', '11.93', '11.79', '11.64', '11.50', '11.36', '11.22', '11.07', '10.93', '10.79', '10.65', '10.50', '10.36', '696653', '557322', '417992', '278661', '139331'];
const rightAxis = ['10.04%', '8.78%', '7.53%', '6.27%', '5.02%', '3.76%', '2.51%', '1.25%', '0.00%', '1.25%', '2.51%', '3.76%', '5.02%', '6.27%', '7.53%', '8.78%', '8.7亿', '7.0亿', '5.2亿', '3.5亿', '1.7亿'];
leftAxis.forEach((v, i) => {
    const y = Math.round(133 + i * 45.3);
    const c = i < 8 ? RED : i === 8 ? '#fff' : i < 16 ? '#50be8c' : LABEL;
    if (i) s += line(2680, y, 3738, y, '#222a36', 1, 'stroke-dasharray="2 6"');
    s += text(2668, y, v, c, 'end') + text(3745, y, rightAxis[i], c);
});
[2812, 2945, 3079, 3344, 3477, 3610].forEach(x => s += line(x, 135, x, 1084, '#1f2630', 2, dots));
s += line(3207, 135, 3207, 1084, '#20242c') + line(2677, 92, 2677, 1121, '#222429') + line(3738, 92, 3738, 1121, '#222429');
s += line(2677, 859, 3738, 859, '#24282e') + line(2566, 1085, 3840, 1085, '#2a2a2e');
s += poly('2676,291 2677,250 2679,210 2681,133 3738,133', BLUE, 3);
s += poly('2681,228 2695,225 2710,222 2740,219 2797,217 3029,215 3191,214 3212,205 3373,204 3427,201 3469,198 3524,196 3541,187 3738,187', '#d27d28', 3);
s += line(2681, 876, 2681, 1084, RED);
s += line(2684, 1083, 3738, 1083, '#e4e4e4', 3, 'stroke-dasharray="2 2"');
[[2685, 1078], [2707, 1080], [2713, 1080], [2757, 1080], [3195, 1072], [3199, 1080], [3213, 1070], [3425, 1079], [3430, 1076], [3434, 1076], [3483, 1080], [3523, 1080], [3535, 1046], [3539, 1074]]
    .forEach(([x, y]) => s += line(x, y, x, 1084, '#e4e4e4'));
s += text(2677, 762, '竟价: 29086万_竟换Z: 5.45%', '#c81e1e') + text(3738, 762, '1811:2653_40%_13432亿', '#6ee628', 'end');
s += text(2677, 842, '竟占昨: 277%_昨额: 1.05亿', '#c81e1e') + text(3738, 842, '14.15亿 / 55.58亿_换手Z: 25.82%', '#3ca0a0', 'end');
[[2675, '09:30'], [2939, '10:30'], [3209, '13:00'], [3475, '14:00'], [3735, '15:00']].forEach(([x, v]) => s += text(x, 1101, v, LABEL, 'end'));
document.getElementById('minute').innerHTML = s;
```
